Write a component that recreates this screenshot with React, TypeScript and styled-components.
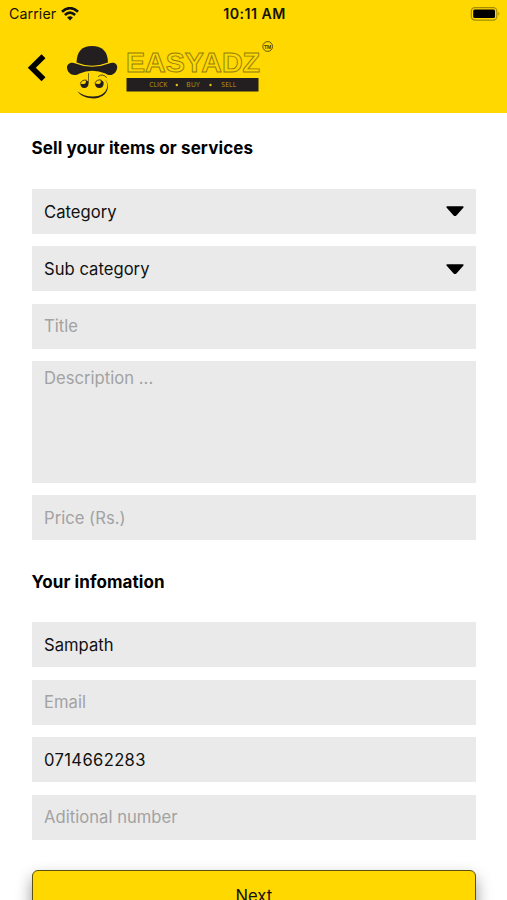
import React from 'react';
import styled, { createGlobalStyle } from 'styled-components';

const YELLOW = '#ffd800';
const INK = '#231f20';

const GlobalStyle = createGlobalStyle`
  *, *::before, *::after { box-sizing: border-box; }
  html, body { margin: 0; height: 100%; overflow: hidden; background: #fff; }
  body { font-family: Inter, "Liberation Sans", sans-serif; color: #111; }
`;

const Screen = styled.main`
  display: flex;
  flex-direction: column;
  width: 100%;
  height: 900px;
  overflow: hidden;
  background: #fff;
`;

const Header = styled.header`
  flex: none;
  height: 112.5px;
  background: ${YELLOW};
`;

const StatusBar = styled.div`
  display: grid;
  grid-template-columns: 1fr auto 1fr;
  align-items: center;
  height: 27px;
  padding: 0 7px 0 9px;
  font-size: 14.2px;
  color: #151204;
`;

const Carrier = styled.div`
  display: flex;
  align-items: center;
  gap: 5px;
  letter-spacing: 0.1px;
`;

const Clock = styled.div`
  font-size: 14.2px;
  font-weight: 600;
  letter-spacing: 0.45px;
`;

const Battery = styled.svg`
  justify-self: end;
`;

const NavBar = styled.div`
  display: flex;
  height: 75px;
  padding: 9px 0 0 26px;
`;

const BackButton = styled.button`
  width: 34px;
  height: 64px;
  padding: 0;
  border: 0;
  background: none;
  color: #000;
`;

const Content = styled.form`
  flex: none;
  display: flex;
  flex-direction: column;
  padding: 0 31px 0 31.5px;
`;

const Heading = styled.h2<{ $top: number }>`
  margin: ${(p) => p.$top}px 0 28.5px;
  font-size: 17px;
  line-height: 24px;
  font-weight: 700;
  letter-spacing: 0.1px;
  color: #000;
`;

const Fields = styled.div`
  display: flex;
  flex-direction: column;
  gap: 12.5px;
`;

const fieldText = `
  font-family: Inter, "Liberation Sans", sans-serif;
  font-size: 16.6px;
  letter-spacing: 0.03px;
  color: #111;
`;

const Select = styled.button`
  ${fieldText}
  display: flex;
  align-items: center;
  justify-content: space-between;
  height: 45px;
  padding: 1px 12px 0 12.5px;
  border: 0;
  border-radius: 0;
  background: #eaeaea;
`;

const Input = styled.input`
  ${fieldText}
  display: block;
  width: 100%;
  height: 45px;
  padding: 0 12px 0 12.5px;
  border: 0;
  border-radius: 0;
  background: #eaeaea;
  &[type='tel'] { letter-spacing: 0.35px; }
  &::placeholder { color: #a2a2a2; opacity: 1; }
`;

const TextArea = styled.textarea`
  ${fieldText}
  display: block;
  width: 100%;
  height: 121.7px;
  padding: 7px 12px 6px 12.5px;
  line-height: 20px;
  border: 0;
  border-radius: 0;
  resize: none;
  background: #eaeaea;
  &::placeholder { color: #a2a2a2; opacity: 1; }
`;

const NextButton = styled.button`
  ${fieldText}
  height: 50px;
  margin-top: 30px;
  padding: 2px 0 0;
  border: 1px solid #5b5010;
  border-radius: 6px;
  background: ${YELLOW};
  box-shadow: 0 8px 16px rgba(0, 0, 0, 0.42);
`;

const Wifi = () => (
  <svg width="18" height="14" viewBox="0 0 18 14" fill="none" stroke="#111" strokeWidth="2.7">
    <path d="M1 4.700Q9-2.300 17 4.700M3.900 8q5.100-4.600 10.200 0" />
    <path d="M6.100 10.400q2.900-2.400 5.800 0L9 13.400z" fill="#111" stroke="none" />
  </svg>
);

const Caret = () => (
  <svg width="18" height="11" viewBox="0 0 18 11">
    <path d="M1.300.3h15.400q1.600.3.600 1.500L10.400 9.500q-1.400 1.200-2.800 0L.7 1.800Q-.3.600 1.300.3z" fill="#000" />
  </svg>
);

const Logo = () => (
  <svg width="220" height="66" viewBox="60 36 220 66" role="img" aria-label="EasyAdz">
    <g fill={INK}>
      <path d="M76.500 62.500C77 51 82 46 92 46s15.700 5 16 16.500q-16 6.500-31.500 0z" />
      <path d="M75.500 63.400Q92 70.200 109 63.400C113.500 61.500 117.500 63.500 117.200 67.500 116.500 74 110.500 77.200 105.500 73.400Q92 68.300 79.500 73.400C73.500 77.200 67.200 73.500 67 67.500 67 63.500 71.500 61.600 75.500 63.400z" />
      <path d="M80.300 83.200q0 4.800 4 4.800 4-.3 4.300-4.600.1-2.300-2.800-3.300.7 3.300-1.600 3.900-2 .3-3.900-.8z" />
      <path d="M94.800 83q.3 5 4.500 5 4.300-.3 4.400-4.800-.1-2.400-3.200-3.200 1 3.300-1.400 4-2.200.3-4.300-1z" />
      <path d="M104.500 79c5.500 5 3.300 17.300-11.300 17.500-6.500 0-11.800-2-15.700-5.300 3 5 10.500 7.200 16.200 7.200 14.800-.5 17.300-14.200 10.800-19.400z" />
    </g>
    <g fill="none" stroke={INK} strokeLinecap="round">
      <path d="M88.500 73.500v9" strokeWidth=".6" />
      <path d="M80.500 83q1.500-3.500 5.700-2.900M95 82.700q2-3.600 6-2.700M98.500 76.300q4-3.300 8 1" strokeWidth=".8" />
    </g>
    <text x="126" y="72.300" textLength="134" lengthAdjust="spacingAndGlyphs" fontFamily="Liberation Sans, sans-serif" fontWeight="700" fontSize="27.500" fill={YELLOW} stroke="#927c10" strokeWidth=".9">EASYADZ</text>
    <rect x="126.500" y="78" width="132" height="13.500" fill={INK} />
    <g fontFamily="Open Sans, sans-serif" fontSize="6.700" fill="#b89d0c">
      <text x="149.300" y="87.400" textLength="18">CLICK</text>
      <text x="186.300" y="87.400" textLength="13.500">BUY</text>
      <text x="221.300" y="87.400" textLength="15">SELL</text>
    </g>
    <circle cx="176.800" cy="85" r="1.200" fill="#e1c014" />
    <circle cx="210.500" cy="85" r="1.200" fill="#e1c014" />
    <circle cx="267.700" cy="46.500" r="4.900" fill="none" stroke="#665712" strokeWidth="1" />
    <text x="264" y="48.500" textLength="7.400" lengthAdjust="spacingAndGlyphs" fontFamily="Liberation Sans, sans-serif" fontWeight="700" fontSize="5" fill="#40370c">TM</text>
  </svg>
);

type Field = {
  placeholder: string;
  value?: string;
  type?: string;
  multiline?: boolean;
  select?: boolean;
};

const itemFields: Field[] = [
  { placeholder: 'Category', select: true },
  { placeholder: 'Sub category', select: true },
  { placeholder: 'Title' },
  { placeholder: 'Description ...', multiline: true },
  { placeholder: 'Price (Rs.)' },
];

const contactFields: Field[] = [
  { placeholder: 'Name', value: 'Sampath' },
  { placeholder: 'Email' },
  { placeholder: 'Phone', value: '0714662283', type: 'tel' },
  { placeholder: 'Aditional number' },
];

const FieldList = ({ fields }: { fields: Field[] }) => (
  <Fields>
    {fields.map((f) => {
      if (f.select) {
        return <Select key={f.placeholder} type="button">{f.placeholder}<Caret /></Select>;
      }
      if (f.multiline) return <TextArea key={f.placeholder} placeholder={f.placeholder} />;
      return (
        <Input
          key={f.placeholder}
          type={f.type ?? 'text'}
          placeholder={f.placeholder}
          defaultValue={f.value}
        />
      );
    })}
  </Fields>
);

export default function App() {
  return (
    <Screen>
      <GlobalStyle />
      <Header>
        <StatusBar>
          <Carrier>Carrier <Wifi /></Carrier>
          <Clock>10:11 AM</Clock>
          <Battery width="30" height="16" viewBox="0 0 30 16">
            <rect x="1.300" y="1.600" width="25.500" height="12.500" rx="3.600" fill="none" stroke="#a58c08" strokeWidth="1.200" />
            <rect x="3.200" y="3.600" width="21.800" height="8.500" rx="1.500" fill="#000" />
            <path d="M28.300 5.800q2.200 2 0 4z" fill="#a58c08" />
          </Battery>
        </StatusBar>
        <NavBar>
          <BackButton type="button" aria-label="Back">
            <svg width="34" height="64" viewBox="26 36 34 64" fill="none">
              <path d="M43.500 56.300L31.800 67.800l11.700 11.500" stroke="currentColor" strokeWidth="5.600" />
            </svg>
          </BackButton>
          <Logo />
        </NavBar>
      </Header>
      <Content>
        <Heading $top={23.700}>Sell your items or services</Heading>
        <FieldList fields={itemFields} />
        <Heading $top={29.500}>Your infomation</Heading>
        <FieldList fields={contactFields} />
        <NextButton type="button">Next</NextButton>
      </Content>
    </Screen>
  );
}
